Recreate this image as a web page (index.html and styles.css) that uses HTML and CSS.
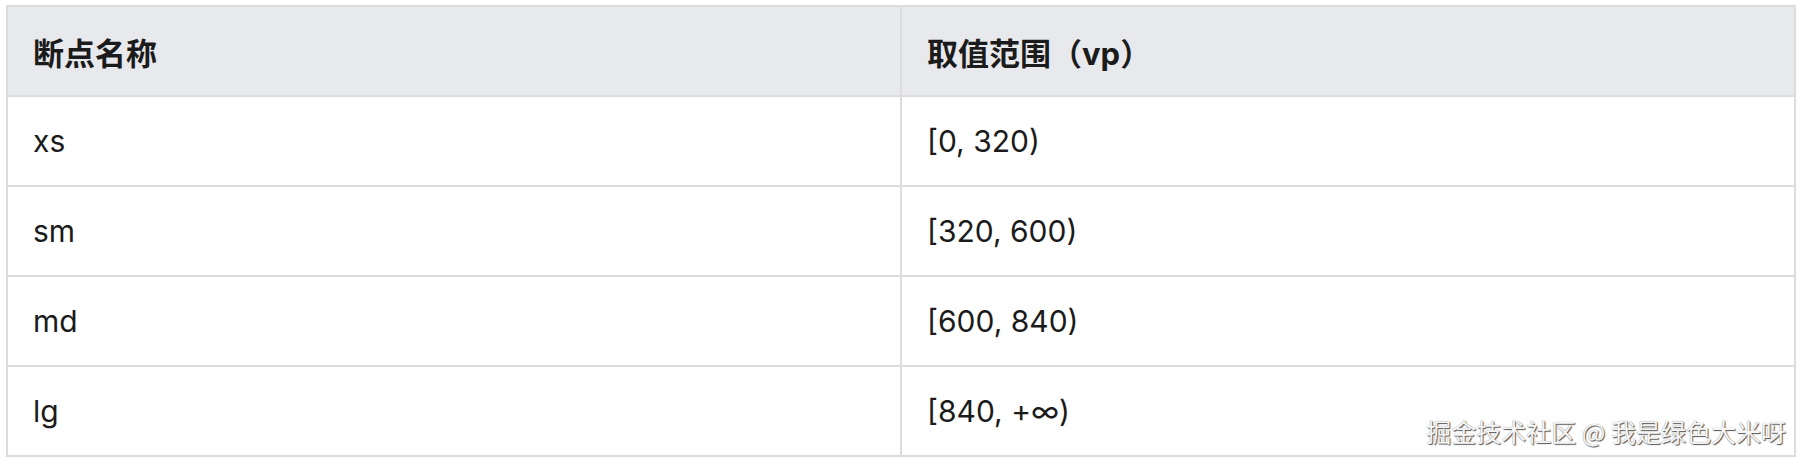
FILE: index.html
```html
<!DOCTYPE html>
<html lang="zh-CN">
<head>
<meta charset="utf-8">
<title>断点</title>
<link rel="stylesheet" href="styles.css">
</head>
<body>
<div class="wrap">
  <table class="bp-table">
    <thead>
      <tr><th>断点名称</th><th>取值范围（vp）</th></tr>
    </thead>
    <tbody>
      <tr><td>xs</td><td>[0, 320)</td></tr>
      <tr><td>sm</td><td>[320, 600)</td></tr>
      <tr><td>md</td><td>[600, 840)</td></tr>
      <tr><td>lg</td><td>[840, +∞)</td></tr>
    </tbody>
  </table>
  <div class="watermark">掘金技术社区 @ 我是绿色大米呀</div>
</div>
</body>
</html>
```

FILE: styles.css
```css
html, body {
  margin: 0;
  padding: 0;
  background: #ffffff;
}
body {
  font-family: Inter, "Noto Sans CJK SC", sans-serif;
  color: #1b1b1b;
}
.wrap {
  position: relative;
  padding: 5px 6px 0 6px;
}
.bp-table {
  width: 1790px;
  border-collapse: collapse;
  border: 2px solid #dcdcdc;
  table-layout: fixed;
}
.bp-table th,
.bp-table td {
  border: 2px solid #dcdcdc;
  height: 90px;
  padding: 0 0 0 25px;
  text-align: left;
  vertical-align: middle;
  font-size: 30px;
  box-sizing: border-box;
}
.bp-table th {
  background: #e8e9ec;
  font-weight: 700;
  font-size: 31px;
}
.bp-table td {
  font-weight: 400;
  background: #ffffff;
}
.watermark {
  position: absolute;
  right: 16px;
  top: 413px;
  font-family: "Noto Sans CJK SC", sans-serif;
  font-size: 25px;
  color: #f6f6f6;
  text-shadow: 1px 1px 1px #555, 0 0 1px #888;
}
```
